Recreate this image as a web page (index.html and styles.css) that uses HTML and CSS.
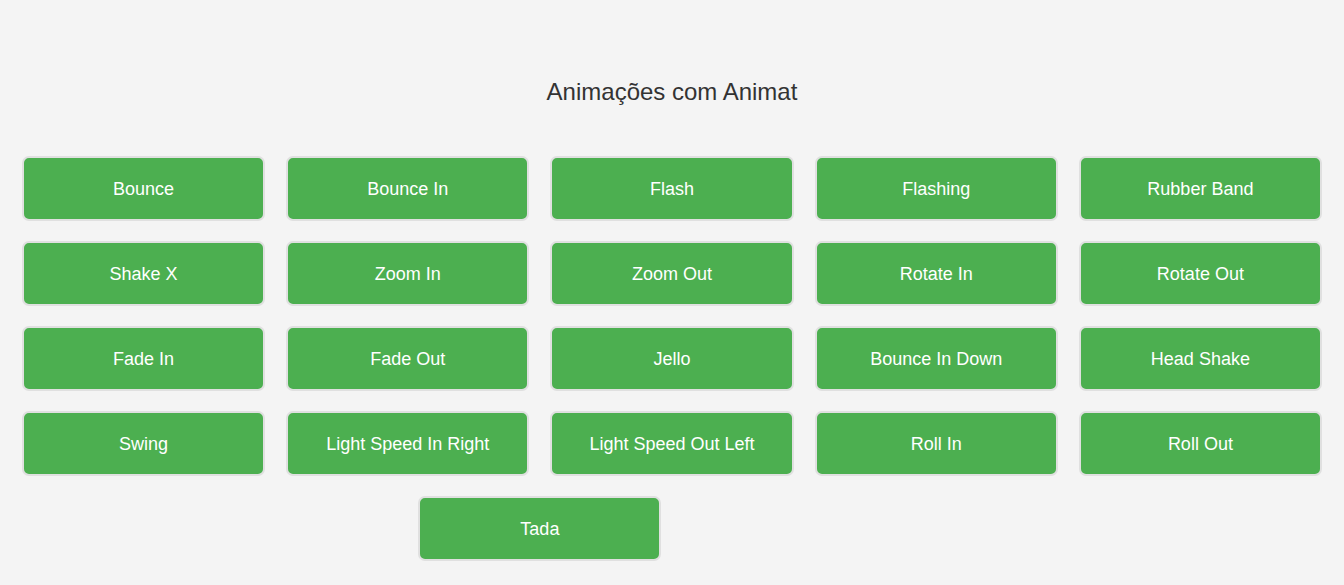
FILE: index.html
```html
<!DOCTYPE html>
<html lang="pt">
<head>
<meta charset="utf-8">
<title>Animações com Animat</title>
<link rel="stylesheet" href="styles.css">
</head>
<body>
<h1 class="title">Animações com Animat</h1>
<div class="grid">
  <button class="btn">Bounce</button>
  <button class="btn">Bounce In</button>
  <button class="btn">Flash</button>
  <button class="btn">Flashing</button>
  <button class="btn">Rubber Band</button>
  <button class="btn">Shake X</button>
  <button class="btn">Zoom In</button>
  <button class="btn">Zoom Out</button>
  <button class="btn">Rotate In</button>
  <button class="btn">Rotate Out</button>
  <button class="btn">Fade In</button>
  <button class="btn">Fade Out</button>
  <button class="btn">Jello</button>
  <button class="btn">Bounce In Down</button>
  <button class="btn">Head Shake</button>
  <button class="btn">Swing</button>
  <button class="btn">Light Speed In Right</button>
  <button class="btn">Light Speed Out Left</button>
  <button class="btn">Roll In</button>
  <button class="btn">Roll Out</button>
  <button class="btn btn-tada">Tada</button>
</div>
</body>
</html>
```

FILE: styles.css
```css
html, body {
  margin: 0;
  padding: 0;
  background: #f4f4f4;
  font-family: "Liberation Sans", Arial, sans-serif;
}
.title {
  margin: 0;
  padding-top: 78px;
  font-size: 24px;
  line-height: 28px;
  font-weight: normal;
  color: #333;
  text-align: center;
}
.grid {
  display: grid;
  grid-template-columns: repeat(10, 1fr);
  column-gap: 21px;
  row-gap: 20px;
  padding: 50px 22px 0 22px;
}
.btn {
  grid-column: span 2;
  height: 65px;
  margin: 0;
  padding: 2px 0 0 0;
  background: #4caf50;
  color: #fff;
  border: 2px solid #e0e0e0;
  border-radius: 7px;
  font-family: "Liberation Sans", Arial, sans-serif;
  font-size: 18px;
  cursor: pointer;
}
.btn-tada {
  grid-column: 4 / span 2;
}
```
